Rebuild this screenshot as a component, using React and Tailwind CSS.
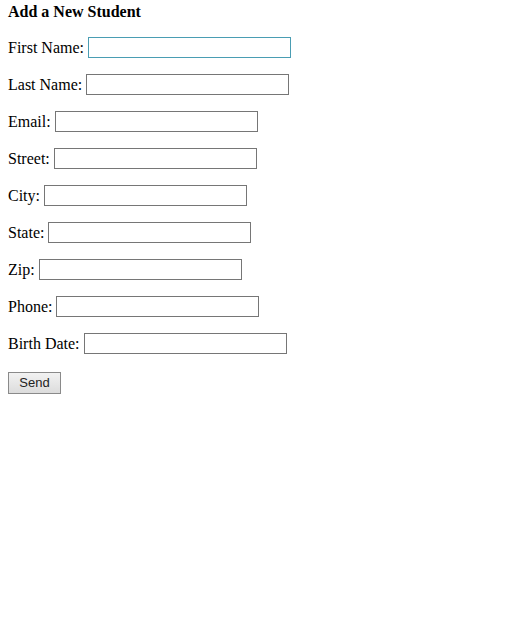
const fields = ["First Name", "Last Name", "Email", "Street", "City", "State", "Zip", "Phone", "Birth Date"]

export default function App() {
    return (
        <div className="min-h-screen bg-white px-2 pt-[3px] text-black font-['Liberation_Serif',serif] text-base">
            <h4 className="font-bold leading-[18px]">Add a New Student</h4>
            {fields.map((f, i) => (
                <div key={f} className="mt-4 flex items-center h-[21px]">
                    <label className="leading-[18px]">{f}:</label>
                    <input
                        type="text"
                        className={
                            "ml-1 w-[203px] h-[21px] bg-white border outline-none " +
                            (i === 0 ? "border-[#4a9db3]" : "border-[#767676]")
                        }
                    />
                </div>
            ))}
            <div className="mt-4">
                <button className="w-[53px] h-[22px] border border-[#8a8a8a] bg-gradient-to-b from-[#f2f2f2] to-[#dcdcdc] text-[13px] font-['Liberation_Sans',sans-serif] text-[#222]">
                    Send
                </button>
            </div>
        </div>
    )
}
